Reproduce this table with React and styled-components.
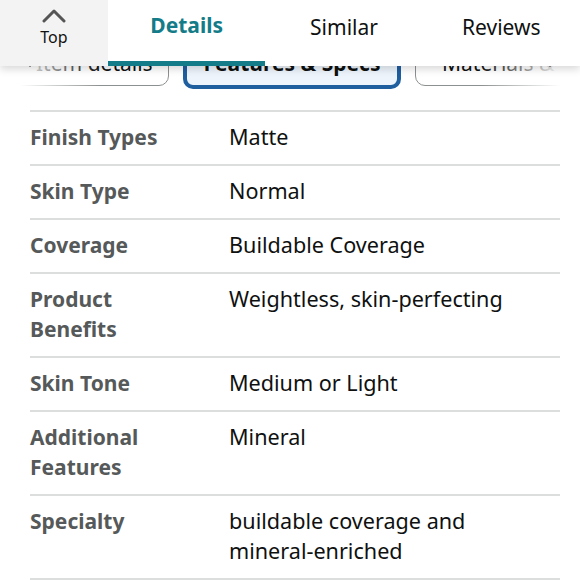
import React from "react";
import styled, { createGlobalStyle } from "styled-components";

const GlobalStyle = createGlobalStyle`
  html, body { margin: 0; padding: 0; background: #fff; }
  body { font-family: "Noto Sans", "Liberation Sans", sans-serif; color: #0f1111; }
`;

const Page = styled.div`
  position: relative;
  width: 580px;
  height: 580px;
  overflow: hidden;
  background: #fff;
`;

const Header = styled.header`
  position: absolute;
  top: 0;
  left: 0;
  right: 0;
  height: 66px;
  display: flex;
  background: #fff;
  box-shadow: 0 3px 8px rgba(0, 0, 0, 0.16);
  z-index: 3;
`;

const TopButton = styled.div`
  width: 108px;
  flex-shrink: 0;
  background: #f3f3f3;
  display: flex;
  flex-direction: column;
  align-items: center;
  gap: 4px;
  padding-top: 7px;
  box-sizing: border-box;
  font-size: 16px;
  line-height: 20px;
  color: #111;
`;

const Tab = styled.div`
  position: relative;
  flex: 1;
  display: flex;
  justify-content: center;
  padding-top: ${(p) => (p.$active ? "10px" : "12px")};
  font-size: 21px;
  line-height: 30px;
  font-weight: ${(p) => (p.$active ? 700 : 400)};
  color: ${(p) => (p.$active ? "#137c88" : "#0f1111")};
  &::after {
    content: "";
    display: ${(p) => (p.$active ? "block" : "none")};
    position: absolute;
    left: 0;
    right: 0;
    bottom: 0;
    height: 5px;
    background: #137c88;
  }
`;

const ChipArea = styled.div`
  position: relative;
  height: 92px;
  padding-top: 36px;
  box-sizing: border-box;
  overflow: hidden;
`;

const ChipRow = styled.div`
  display: flex;
  align-items: center;
  gap: 14px;
  height: 54px;
  margin-left: 9px;
`;

const Chip = styled.div`
  flex-shrink: 0;
  width: ${(p) => p.$w}px;
  height: ${(p) => (p.$selected ? 52 : 46)}px;
  box-sizing: border-box;
  border-radius: 10px;
  border: ${(p) => (p.$selected ? "4px solid #1f5e9f" : "1.5px solid #8d9090")};
  background: ${(p) => (p.$selected ? "#edf4fb" : "#fff")};
  display: flex;
  align-items: center;
  justify-content: ${(p) => (p.$left ? "flex-start" : "center")};
  padding-left: ${(p) => (p.$left ? "26px" : "0")};
  font-size: 21px;
  font-weight: ${(p) => (p.$selected ? 700 : 400)};
  color: #0f1111;
  white-space: nowrap;
`;

const Fade = styled.div`
  position: absolute;
  top: 0;
  bottom: 0;
  ${(p) => (p.$side === "left" ? "left: 0;" : "right: 0;")}
  width: 100px;
  background: linear-gradient(
    ${(p) => (p.$side === "left" ? "to right" : "to left")},
    #fff 0%,
    #fff 20%,
    rgba(255, 255, 255, 0) 100%
  );
  display: flex;
  align-items: center;
  justify-content: ${(p) => (p.$side === "left" ? "flex-start" : "flex-end")};
  padding: 26px 22px 0;
  box-sizing: border-box;
  z-index: 1;
`;

const Table = styled.div`
  margin: 18px 20px 0 30px;
  display: flex;
  flex-direction: column;
`;

const Row = styled.div`
  display: grid;
  grid-template-columns: 199px 1fr;
  border-top: 2px solid #dcdede;
  border-bottom: ${(p) => (p.$last ? "2px solid #dcdede" : "none")};
  padding: 10px 0 12px;
  font-size: 21px;
  line-height: 30px;
`;

const Label = styled.div`
  font-weight: 700;
  color: #565959;
`;

const Value = styled.div`
  font-size: 21.6px;
  color: #0f1111;
`;

const rows = [
  ["Finish Types", "Matte"],
  ["Skin Type", "Normal"],
  ["Coverage", "Buildable Coverage"],
  [["Product", "Benefits"], "Weightless, skin-perfecting"],
  ["Skin Tone", "Medium or Light"],
  [["Additional", "Features"], "Mineral"],
  ["Specialty", ["buildable coverage and", "mineral-enriched"]],
];

const lines = (v) =>
  Array.isArray(v)
    ? v.map((t, i) => (
        <React.Fragment key={i}>
          {t}
          {i < v.length - 1 && <br />}
        </React.Fragment>
      ))
    : v;

const Chevron = ({ dir }) => (
  <svg width="10" height="16" viewBox="0 0 10 16">
    <path
      d={dir === "left" ? "M8 2 L2 8 L8 14" : "M2 2 L8 8 L2 14"}
      fill="none"
      stroke="#111"
      strokeWidth="3"
      strokeLinecap="round"
      strokeLinejoin="round"
    />
  </svg>
);

export default function App() {
  return (
    <Page>
      <GlobalStyle />
      <Header>
        <TopButton>
          <svg width="24" height="16" viewBox="0 0 24 16">
            <path
              d="M2 14 L12 4 L22 14"
              fill="none"
              stroke="#555"
              strokeWidth="3"
              strokeLinecap="round"
              strokeLinejoin="round"
            />
          </svg>
          <span>Top</span>
        </TopButton>
        <Tab $active>Details</Tab>
        <Tab>Similar</Tab>
        <Tab>Reviews</Tab>
      </Header>
      <ChipArea>
        <Fade $side="left">
          <Chevron dir="left" />
        </Fade>
        <ChipRow>
          <Chip $w={160} $left>Item details</Chip>
          <Chip $w={218} $selected>Features &amp; Specs</Chip>
          <Chip $w={200} $left>Materials &amp; Care</Chip>
        </ChipRow>
        <Fade $side="right">
          <Chevron dir="right" />
        </Fade>
      </ChipArea>
      <Table>
        {rows.map(([k, v], i) => (
          <Row key={i} $last={i === rows.length - 1}>
            <Label>{lines(k)}</Label>
            <Value>{lines(v)}</Value>
          </Row>
        ))}
      </Table>
    </Page>
  );
}
